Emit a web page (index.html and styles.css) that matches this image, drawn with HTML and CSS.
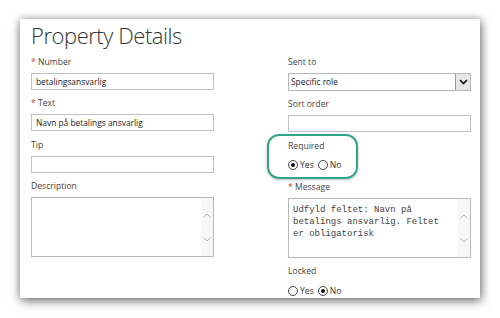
FILE: index.html
```html
<!DOCTYPE html>
<html>
<head>
<meta charset="utf-8">
<link rel="stylesheet" href="styles.css">
</head>
<body>
<div class="card">
  <h1 class="title">Property Details</h1>
  <div class="cols">
    <div class="col">
      <div class="field">
        <div class="label"><span class="req">*</span> Number</div>
        <div class="input">betalingsansvarlig</div>
      </div>
      <div class="field">
        <div class="label"><span class="req">*</span> Text</div>
        <div class="input">Navn på betalings ansvarlig</div>
      </div>
      <div class="field">
        <div class="label">Tip</div>
        <div class="input"></div>
      </div>
      <div class="field">
        <div class="label">Description</div>
        <div class="textarea">
          <div class="ta-text"></div>
          <div class="scroll">
            <svg width="8" height="5" viewBox="0 0 8 5"><path d="M0.5 4.5 L4 1 L7.5 4.5" fill="none" stroke="#b4b4b4" stroke-width="1"/></svg>
            <svg width="8" height="5" viewBox="0 0 8 5"><path d="M0.5 0.5 L4 4 L7.5 0.5" fill="none" stroke="#b4b4b4" stroke-width="1"/></svg>
          </div>
        </div>
      </div>
    </div>
    <div class="col">
      <div class="field">
        <div class="label">Sent to</div>
        <div class="select">
          <span class="sel-text">Specific role</span>
          <span class="sel-btn"><svg width="9" height="6" viewBox="0 0 9 6"><path d="M1 1 L4.5 4.5 L8 1" fill="none" stroke="#111" stroke-width="1.6"/></svg></span>
        </div>
      </div>
      <div class="field">
        <div class="label">Sort order</div>
        <div class="input"></div>
      </div>
      <div class="field">
        <div class="label">Required</div>
        <div class="radios">
          <span class="radio checked"></span><span class="rlabel">Yes</span>
          <span class="radio"></span><span class="rlabel">No</span>
        </div>
      </div>
      <div class="field">
        <div class="label"><span class="req">*</span> Message</div>
        <div class="textarea">
          <div class="ta-text mono">Udfyld feltet: Navn på<br>betalings ansvarlig. Feltet<br>er obligatorisk</div>
          <div class="scroll">
            <svg width="8" height="5" viewBox="0 0 8 5"><path d="M0.5 4.5 L4 1 L7.5 4.5" fill="none" stroke="#b4b4b4" stroke-width="1"/></svg>
            <svg width="8" height="5" viewBox="0 0 8 5"><path d="M0.5 0.5 L4 4 L7.5 0.5" fill="none" stroke="#b4b4b4" stroke-width="1"/></svg>
          </div>
        </div>
      </div>
      <div class="field">
        <div class="label">Locked</div>
        <div class="radios">
          <span class="radio"></span><span class="rlabel">Yes</span>
          <span class="radio checked"></span><span class="rlabel">No</span>
        </div>
      </div>
    </div>
  </div>
  <div class="highlight"></div>
</div>
</body>
</html>
```

FILE: styles.css
```css
html, body {
  margin: 0;
  padding: 0;
  background: #ffffff;
}
body {
  padding: 19px 20px;
  font-family: "Open Sans", "Noto Sans", sans-serif;
  color: #333;
}
.card {
  position: relative;
  width: 460px;
  height: 279px;
  box-sizing: border-box;
  padding: 1px 9px 0 11px;
  background: #fff;
  box-shadow: 1px 3px 10px rgba(0,0,0,0.5), 0 0 7px rgba(0,0,0,0.22);
}
.title {
  margin: 0 0 6px 0;
  font-size: 22px;
  font-weight: 300;
  line-height: 30px;
  color: #333;
  letter-spacing: -0.45px;
}
.cols {
  display: grid;
  grid-template-columns: 183px 183px;
  column-gap: 74px;
}
.col {
  display: flex;
  flex-direction: column;
  gap: 7.3px;
}
.field {
  display: flex;
  flex-direction: column;
}
.label {
  height: 12px;
  line-height: 12px;
  font-size: 8.6px;
  color: #444;
  margin-bottom: 5px;
  white-space: nowrap;
}
.req {
  color: #d0342c;
}
.input {
  height: 17px;
  box-sizing: border-box;
  border: 1px solid #c2c2c2;
  font-size: 8.4px;
  line-height: 15px;
  padding: 0 4px;
  color: #222;
  white-space: nowrap;
}
.select {
  height: 18px;
  box-sizing: border-box;
  border: 1px solid #b8b8b8;
  display: flex;
  align-items: stretch;
  font-size: 8.4px;
  color: #222;
}
.sel-text {
  flex: 1;
  line-height: 16px;
  padding-left: 2px;
}
.sel-btn {
  width: 14px;
  border-left: 1px solid #9a9a9a;
  background: #e6e6e6;
  display: flex;
  align-items: center;
  justify-content: center;
}
.textarea {
  height: 60px;
  box-sizing: border-box;
  border: 1px solid #b8b8b8;
  display: flex;
}
.ta-text {
  flex: 1;
  padding: 5px 4px;
}
.mono {
  font-family: "Liberation Mono", "Courier New", monospace;
  font-size: 9px;
  line-height: 12px;
  color: #444;
}
.scroll {
  width: 12px;
  background: #f7f7f7;
  display: flex;
  flex-direction: column;
  align-items: center;
  padding: 15px 0 14px;
  justify-content: space-between;
}
.scroll svg {
  display: block;
}
.radios {
  height: 17px;
  display: flex;
  align-items: center;
  font-size: 8.6px;
  color: #333;
}
.radio {
  width: 10px;
  height: 10px;
  box-sizing: border-box;
  border: 1px solid #444;
  border-radius: 50%;
  display: flex;
  align-items: center;
  justify-content: center;
}
.radio.checked::after {
  content: "";
  width: 4px;
  height: 4px;
  border-radius: 50%;
  background: #111;
}
.rlabel {
  margin: 0 4px 0 2px;
}
.highlight {
  position: absolute;
  left: 247px;
  top: 115px;
  width: 91px;
  height: 45px;
  box-sizing: border-box;
  border: 2px solid #2ea586;
  border-radius: 12px;
  box-shadow: 0 1px 3px rgba(0,0,0,0.25);
}
```
